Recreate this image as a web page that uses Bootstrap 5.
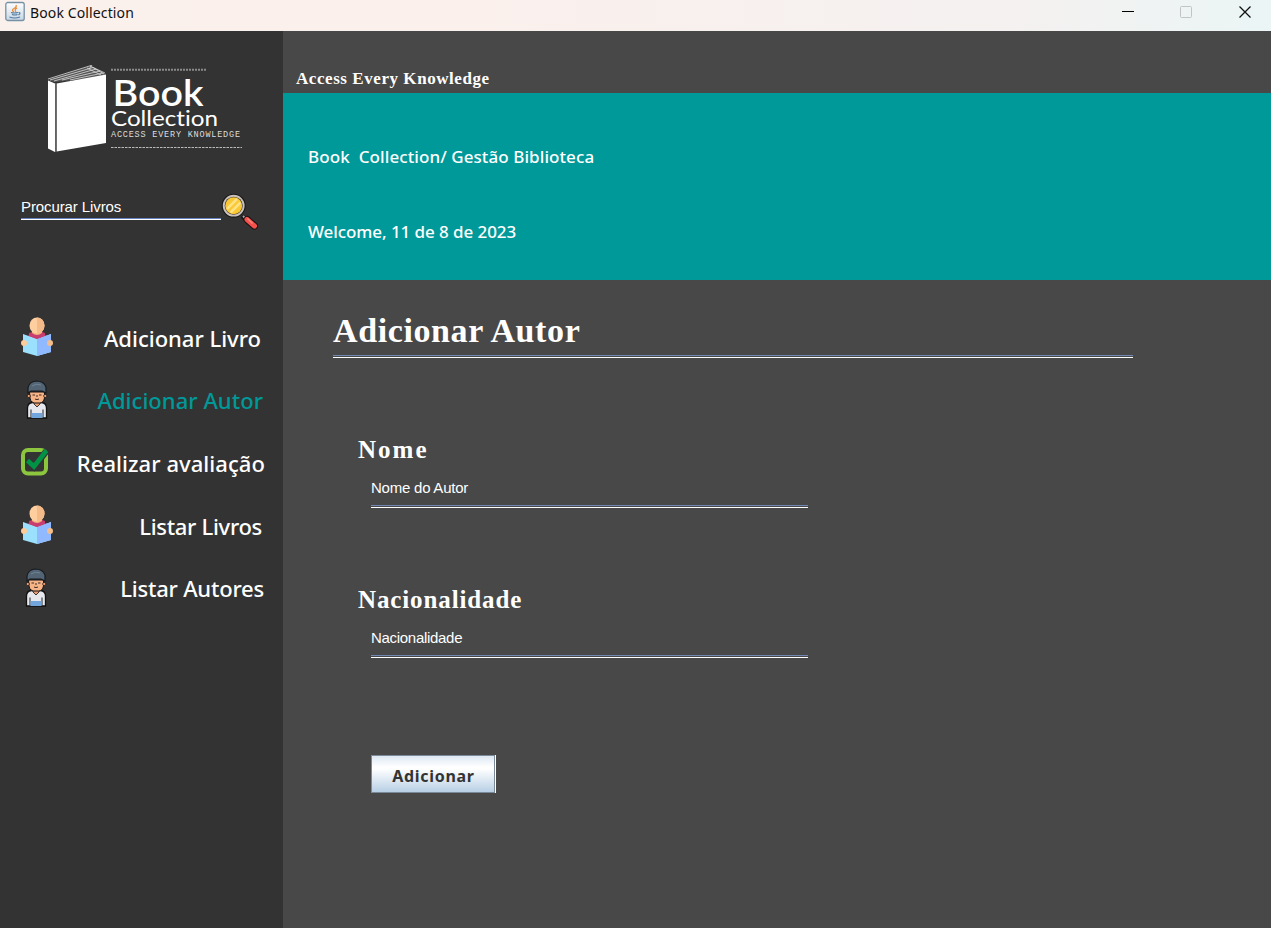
<!DOCTYPE html>
<html lang="pt">
<head>
<meta charset="utf-8">
<meta name="viewport" content="width=device-width, initial-scale=1">
<title>Book Collection</title>
<link href="https://cdn.jsdelivr.net/npm/bootstrap@5.3.0/dist/css/bootstrap.min.css" rel="stylesheet">
<style>
body{font-family:"Noto Sans",sans-serif;background:#484848;color:#fff;line-height:normal}
.t{white-space:pre;display:block}
.serif{font-family:"Liberation Serif",serif;font-weight:700}
.sans{font-family:"Liberation Sans",sans-serif;font-size:15px;line-height:18px;letter-spacing:-.23px}
.titlebar{height:31px;background:linear-gradient(90deg,#faf0ec 0,#fbf0ec 35%,#f4f1f0 80%,#ebf5f5 100%);color:#111}
.titlebar .t{font-size:14px;line-height:20px;padding-top:3px;margin-left:5px;letter-spacing:.12px}
.side{width:283px;background:#333}
.search{margin:29px 0 0 21px;height:40px}
.search .line{width:200px;height:23px;margin-top:4px;padding-top:1px;border-bottom:1px solid #fff;box-shadow:inset 0 -1px #6382bf;letter-spacing:-.1px}
.menu{margin-top:74px}
.menu-row{height:62.5px;padding-left:17px}
.menu-row svg{margin-bottom:2px}
.menu-row .t{font-size:22px;line-height:30px;font-weight:500}
.active-row{color:#099}
.active-row .t{margin-bottom:1px}
.top-strip{height:62px;padding:38px 0 0 13px;font-size:17px;line-height:19px;letter-spacing:.56px}
.banner{height:187px;background:#099;padding:51px 0 0 25px;font-size:17px;line-height:26px;font-weight:500}
.banner .t+.t{margin-top:49px}
.rule{height:3px;border-top:1px solid #7189b4;border-bottom:1px solid #fff}
.page-title{font-size:34px;line-height:38px;letter-spacing:.6px;margin:32px 0 0 50px}
.main-rule{width:800px;margin:5px 0 0 50px}
.field{margin:78px 0 0 75px}
.field .serif{font-size:25px;line-height:28px}
.field .sans{margin:15px 0 0 13px}
.field .rule{width:437px;margin:8px 0 0 13px}
.metal{margin:97px 0 0 88px;width:124px;height:38px;border:1px solid #7a8a99;border-radius:0;box-shadow:1px 0 #fff;background:linear-gradient(#dde8f3 0,#fff 30%,#fff 36%,#b8cfe5 100%);color:#333!important;font-size:16px;font-weight:700;padding:4px 0 0 1px;line-height:32px;letter-spacing:.7px}
</style>
</head>
<body>
<div class="d-flex flex-column vh-100 overflow-hidden">
<svg width="0" height="0" class="position-absolute">
<defs>
<symbol id="reader" viewBox="0 0 32 40">
<path d="M8 16 16 13 24 16 24 24H8z" fill="#c9366c"/>
<path d="M2 17 16 22 30 17V35L16 39 2 35z" fill="#9be0fd"/>
<path d="M16 22 30 17V35L16 39z" fill="#90b9ff"/>
<path d="M7 18.500Q10 15 16 15t9 3.500L16 22z" fill="#c83d70"/>
<path d="M11 12h10v4q-5 4-10 0z" fill="#f2b27c"/>
<ellipse cx="16" cy="8.500" rx="7.500" ry="8" fill="#ffce9e"/>
<path d="M16 .5a7.500 8 0 0 1 0 16z" fill="#f4bb88"/>
<circle cx="3" cy="26" r="3" fill="#ffcb99"/><circle cx="29" cy="26" r="3" fill="#f4bd8b"/>
</symbol>
<symbol id="author" viewBox="0 0 22 39">
<path d="M1.500 38V28q0-5 5-5.500l9 0q5 .5 5 5.500v10z" fill="#e6e8ed" stroke="#111" stroke-width="1.300"/>
<path d="M5 37.500v-8M17 37.500v-8" stroke="#222" stroke-width="1"/>
<path d="M5.500 33h11v5h-11z" fill="#72a5dc"/>
<path d="M8 21h6v3l-3 3-3-3z" fill="#e89d70" stroke="#171313" stroke-width=".8"/>
<path d="M3.500 12h15v6q-1 5-5 5H8q-4-1-4-5z" fill="#f6b486" stroke="#171313" stroke-width="1"/>
<circle cx="2.800" cy="16" r="1.600" fill="#e99d70" stroke="#171313" stroke-width=".7"/><circle cx="19.200" cy="16" r="1.600" fill="#e99d70" stroke="#171313" stroke-width=".7"/>
<path d="M2 13V8q1-6 8-7 8 0 10 6v6l-4-2-11 0z" fill="#536474" stroke="#171b20" stroke-width="1.200"/>
<path d="M6 6q4-3 9-1" stroke="#708395" fill="none"/>
<path d="M6.500 15h2.500M13 15h2.500M9 19q2 1.200 4 0M11 15v2" stroke="#402a24" stroke-width="1" fill="none"/>
</symbol>
</defs>
</svg>
<header class="titlebar d-flex flex-shrink-0">
<svg width="20" height="21" viewBox="0 0 20 21" style="margin:1px 0 0 5px" class="flex-shrink-0"><defs><linearGradient id="jb" x2="0" y2="1"><stop stop-color="#fff"/><stop offset="1" stop-color="#c5d6e5"/></linearGradient></defs><rect x=".8" y="1.500" width="18.400" height="18" rx="2" fill="url(#jb)" stroke="#7890a4" stroke-width="1.300"/><path d="M11 4q1 2-2 3.500T9 11M12 7q-3 1.500-1 4" fill="none" stroke="#ee8b36" stroke-width="1.300"/><path d="M6 11.500q3 1 7 0M7 13.500q3 1 5.500 0M4.500 16q5 2 10.500 0M13.500 11.500q3 0 0 2.500" fill="none" stroke="#527a9f" stroke-width="1.200"/></svg>
<span class="t">Book Collection</span>
<svg class="ms-auto flex-shrink-0" width="150" height="31" viewBox="0 0 150 31" fill="none"><path d="M1 11.500h12" stroke="#000"/><rect x="59.500" y="6.500" width="11" height="11" rx="1" stroke="#c0c4c4"/><path d="M118.500 6.500l11 11m0-11-11 11" stroke="#111" stroke-width="1.300"/></svg>
</header>
<div class="d-flex flex-grow-1">
<aside class="side flex-shrink-0">
<svg class="d-block" style="margin:27px 0 0 40px" width="210" height="106" viewBox="40 58 210 106">
<path d="M48 80 90 66 106 74 104 77 54 82z" fill="#555"/>
<path d="M48 79 91 65.500M50 80 93 67.500 104 74M54 81 96 69M62 80 100 71M70 80 103 73M90 66 105 73M87 68 101 75M92 65l-3 4" stroke="#ddd" stroke-width=".8" fill="none"/>
<path d="M48 80.500 55 83.500V152L48 148.500zM56.700 83.500 106 74.500V143L56.700 151.500z" fill="#fff"/>
<path d="M55.800 83v69" stroke="#777" stroke-width="1"/>
<path d="M111 69.700h95" stroke="#8a8a8a" stroke-width="2" stroke-dasharray="2 1"/>
<path d="M111 147.500h131" stroke="#bbb" stroke-dasharray="2.500 1"/>
<text x="112.500" y="106" font-family="Lato" font-weight="600" font-size="35.500" textLength="91" lengthAdjust="spacingAndGlyphs" fill="#fff">Book</text>
<text x="111" y="126" font-family="Lato" font-size="20.500" textLength="107" lengthAdjust="spacingAndGlyphs" fill="#fff" style="font-variant-ligatures:none">Collection</text>
<text x="111" y="136.700" font-family="Liberation Mono" font-size="8.500" textLength="129" fill="#ddd">ACCESS EVERY KNOWLEDGE</text>
</svg>
<div class="search d-flex">
<div class="line sans"><span class="t">Procurar Livros</span></div>
<svg width="38" height="38" viewBox="0 0 38 38"><path d="M21 23l5 5" stroke="#171717" stroke-width="4"/><path d="M22 23l4 4" stroke="#aaa" stroke-width="1.800"/><path d="M26 26.500l7.500 6.500" stroke="#17100f" stroke-width="7" stroke-linecap="round"/><path d="M26 26.500l7.500 6.500" stroke="#f4504c" stroke-width="5" stroke-linecap="round"/><path d="M26.500 25.500l5 5" stroke="#ff8a80" stroke-width="1.300"/><circle cx="12.700" cy="12.700" r="12" fill="#171717"/><circle cx="12.700" cy="12.700" r="10.900" fill="#cac1bc"/><circle cx="12.700" cy="12.700" r="9" fill="#332c20"/><circle cx="12.700" cy="12.700" r="8.500" fill="#f9c834"/><path d="M6 16 16 6M9.500 19.500 19.500 9.500" stroke="#ffe283" stroke-width="2.500"/></svg>
</div>
<nav class="menu">
<div class="menu-row d-flex align-items-center"><svg width="32" height="40" class="ms-1"><use href="#reader"/></svg><span class="t ms-auto" style="margin-right:22px;letter-spacing:-.01px">Adicionar Livro</span></div>
<div class="menu-row d-flex align-items-center active-row"><svg width="22" height="39" style="margin-left:9px"><use href="#author"/></svg><span class="t ms-auto" style="margin-right:20px;letter-spacing:.04px">Adicionar Autor</span></div>
<div class="menu-row d-flex align-items-center"><svg width="28" height="28" class="ms-1" viewBox="0 0 28 28" fill="none"><rect x="2" y="2" width="23" height="23.500" rx="5" stroke="#8cc63f" stroke-width="4"/><path d="M7 13.500l6 5.500L25.500 3" stroke="#333" stroke-width="6.500"/><path d="M6.500 12.500l6.500 6L25.500 2.500" stroke="#009245" stroke-width="4.600"/></svg><span class="t ms-auto" style="margin-right:18px;letter-spacing:.06px">Realizar avaliação</span></div>
<div class="menu-row d-flex align-items-center"><svg width="32" height="40" class="ms-1"><use href="#reader"/></svg><span class="t ms-auto" style="margin-right:21px;letter-spacing:-.3px">Listar Livros</span></div>
<div class="menu-row d-flex align-items-center"><svg width="22" height="39" style="margin-left:8px"><use href="#author"/></svg><span class="t ms-auto" style="margin-right:19px;letter-spacing:-.2px">Listar Autores</span></div>
</nav>
</aside>
<main class="flex-grow-1">
<div class="top-strip serif">Access Every Knowledge</div>
<div class="banner"><span class="t" style="letter-spacing:.08px">Book  Collection/ Gestão Biblioteca</span><span class="t" style="letter-spacing:-.08px">Welcome, 11 de 8 de 2023</span></div>
<h1 class="page-title serif mb-0">Adicionar Autor</h1>
<div class="rule main-rule"></div>
<div class="field"><div class="serif" style="letter-spacing:2px">Nome</div><div class="sans">Nome do Autor</div><div class="rule"></div></div>
<div class="field"><div class="serif" style="letter-spacing:.88px">Nacionalidade</div><div class="sans" style="letter-spacing:-.3px">Nacionalidade</div><div class="rule"></div></div>
<button class="btn metal d-block">Adicionar</button>
</main>
</div>
</div>
<script src="https://cdn.jsdelivr.net/npm/bootstrap@5.3.0/dist/js/bootstrap.bundle.min.js"></script>
</body>
</html>
